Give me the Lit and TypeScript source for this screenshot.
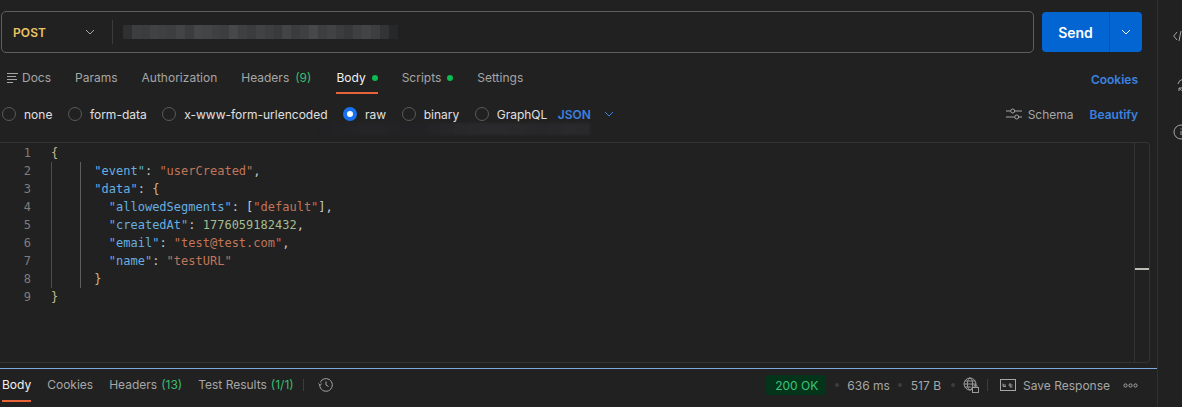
import { LitElement, html, css } from "lit";
import { customElement } from "lit/decorators.js";

const chev = (c: string) => html`<svg width="10" height="6" viewBox="0 0 10 6" fill="none" stroke="${c}" stroke-width="1"><path d="M1 1l4 4 4-4"/></svg>`;

const tones = [46,60,58,64,62,60,66,58,68,66,62,60,70,62,58,64,60,56,66,58,62,70,60,64,58,54,62,66,60,50,38];
const smear = [33,34,35,36,36,35,34,34,36,38,40,41,42,42,41,40,39,40,42,41];

type Tok = [string, string];
const code: { ind: number; toks: Tok[] }[] = [
  { ind: 0, toks: [["b", "{"]] },
  { ind: 6, toks: [["k", '"event"'], ["p", ": "], ["s", '"userCreated"'], ["p", ","]] },
  { ind: 6, toks: [["k", '"data"'], ["p", ": "], ["b", "{"]] },
  { ind: 8, toks: [["k", '"allowedSegments"'], ["p", ": ["], ["s", '"default"'], ["p", "],"]] },
  { ind: 8, toks: [["k", '"createdAt"'], ["p", ": "], ["n", "1776059182432"], ["p", ","]] },
  { ind: 8, toks: [["k", '"email"'], ["p", ": "], ["s", '"test@test.com"'], ["p", ","]] },
  { ind: 8, toks: [["k", '"name"'], ["p", ": "], ["s", '"testURL"']] },
  { ind: 6, toks: [["b", "}"]] },
  { ind: 0, toks: [["b", "}"]] },
];

@customElement("app-root")
export class AppRoot extends LitElement {
  static styles = css`
    :host { display: grid; grid-template-columns: 1157px 25px; width: 1182px; height: 407px; overflow: hidden; background: #212121; color: #a6a6a6; font-family: Inter, "Noto Sans", sans-serif; font-size: 12px; }
    * { box-sizing: border-box; }
    .main { display: flex; flex-direction: column; height: 407px; min-width: 0; }
    .side { border-left: 1px solid #303030; display: flex; flex-direction: column; align-items: flex-start; padding: 31px 0 0 15px; overflow: hidden; }
    .side svg { flex: none; }
    .i2 { margin: 37px 0 0 4px; }
    .i3 { margin-top: 32px; }

    .urlrow { display: flex; gap: 8px; padding: 11px 15px 0 1px; height: 53px; }
    .url { flex: 1; height: 42px; border: 1px solid #5e5e5e; border-radius: 5px; display: flex; align-items: center; }
    .method { width: 111px; height: 24px; display: flex; align-items: center; justify-content: space-between; padding: 0 17px 0 11px; border-right: 1px solid #3c3c3c; color: #ebc465; font-weight: 600; font-size: 12px; letter-spacing: .1px; }
    .blur { display: flex; margin-left: 10px; height: 14px; filter: blur(.6px); }
    .blur i { display: block; width: 8.87px; height: 100%; }
    .send { width: 100px; height: 40px; margin-top: 1px; background: #0265d2; border-radius: 4px; display: flex; color: #fff; font-weight: 600; font-size: 14px; }
    .send-l { width: 68px; display: flex; align-items: center; justify-content: center; border-right: 1px solid #0353ad; }
    .send-r { flex: 1; display: flex; align-items: center; justify-content: center; }

    .tabs { display: flex; align-items: flex-start; height: 40px; padding: 0 19px 0 6px; margin-top: 7px; }
    .tab { height: 34px; display: flex; align-items: center; gap: 6px; margin-right: 24px; border-bottom: 2px solid transparent; padding-top: 3px; }
    .tab.on { color: #f0f0f0; border-bottom-color: #e8633a; }
    .tab.docs { gap: 3px; }
    .tab.hd { margin-right: 25px; }
    .g { color: #3bbd72; }
    .dot { width: 6px; height: 6px; border-radius: 50%; background: #0cbb52; }
    .spring { flex: 1; }
    .link { color: #3b82e0; font-weight: 600; }
    .cookies { padding-top: 12px; }

    .body { display: flex; align-items: center; height: 22px; padding: 0 19px 0 2px; color: #e0e0e0; margin-top: 3px; position: relative; z-index: 1; }
    .opt { display: flex; align-items: center; gap: 8px; margin-right: 15.5px; }
    .radio { width: 14px; height: 14px; border-radius: 50%; border: 1px solid #5a5a5a; flex: none; }
    .radio.on { border: 4px solid #1672ee; background: #fff; }
    .json { margin-left: -5px; display: flex; align-items: center; gap: 13px; }
    .schema { display: flex; align-items: center; gap: 5px; margin-right: 16px; color: #a6a6a6; }

    .smearrow { display: flex; height: 12px; padding-left: 318px; margin-top: -2px; filter: blur(1px); }
    .smearrow i { display: block; width: 13.6px; height: 100%; }

    .ed { height: 221px; margin-top: 7px; margin-right: 7px; border-top: 1px solid #333; border-bottom: 1px solid #333; border-right: 1px solid #333; border-radius: 0 4px 4px 0; display: grid; grid-template-columns: 1fr 14px; background: #212121; position: relative; }
    .lines { padding-top: 1px; font-family: "DejaVu Sans Mono", monospace; font-size: 12px; line-height: 18px; border-right: 1px solid #333; }
    .ln { display: grid; grid-template-columns: 51px 1fr; height: 18px; white-space: pre; }
    .no { color: #7d7d7d; text-align: right; padding-right: 20px; }
    .txt { position: relative; color: #c8c8c8; }
    .guide1, .guide2 { position: absolute; top: 0; bottom: 0; width: 1px; background: #4c4c4c; }
    .guide1 { left: 0; }
    .guide2 { left: 29px; background: #5e5e5e; }
    .k { color: #66aee0; }
    .s { color: #c0765a; }
    .n { color: #a3bd91; }
    .p { color: #c8c8c8; }
    .b { color: #c9b98a; }
    .mini { display: flex; flex-direction: column; padding-top: 125px; }
    .thumb { height: 2px; background: #bdbdb5; }

    .res { margin-top: 5px; border-top: 1px solid #7fa8dc; flex: 1; display: flex; align-items: flex-start; padding: 0 19px 0 2px; }
    .rt { height: 33px; display: flex; align-items: center; gap: 4px; margin-right: 16px; border-bottom: 2px solid transparent; }
    .rt.on { color: #f0f0f0; border-bottom-color: #e8633a; }
    .rt.last { margin-right: 9px; }
    .sep { width: 1px; height: 12px; background: #3d3d3d; }
    .rs { display: flex; align-items: center; height: 32px; }
    .hist { margin-left: 14px; }
    .ok { background: #04351a; color: #3cc47a; padding: 0 8px 0 9px; height: 20px; border-radius: 3px; display: flex; align-items: center; font-size: 12px; }
    .sm { width: 4px; height: 4px; border-radius: 50%; background: #3d3d3d; margin: 0 8.5px; }
    .sm.last { margin: 0 8px 0 10px; }
    .sep2 { margin: 0 12px 0 8px; }
    .save { margin: 0 13px 0 7px; }
  `;

  render() {
    return html`
      <div class="main">
        <div class="urlrow">
          <div class="url">
            <div class="method">POST ${chev("#a6a6a6")}</div>
            <div class="blur">${tones.map((t) => html`<i style="background:rgb(${t},${t + 2},${t + 4})"></i>`)}</div>
          </div>
          <div class="send"><div class="send-l">Send</div><div class="send-r">${chev("#fff")}</div></div>
        </div>
        <div class="tabs">
          <div class="tab docs">
            <svg width="13" height="12" viewBox="0 0 13 12" stroke="#a6a6a6" fill="none"><path d="M1 1.5h11M1 4.5h9M1 7.5h10M1 10.5h6"/></svg>
            Docs
          </div>
          <div class="tab">Params</div>
          <div class="tab">Authorization</div>
          <div class="tab hd">Headers <span class="g">(9)</span></div>
          <div class="tab on">Body <span class="dot"></span></div>
          <div class="tab">Scripts <span class="dot"></span></div>
          <div class="tab">Settings</div>
          <div class="spring"></div>
          <div class="link cookies">Cookies</div>
        </div>
        <div class="body">
          <div class="opt"><span class="radio"></span>none</div>
          <div class="opt"><span class="radio"></span>form-data</div>
          <div class="opt"><span class="radio"></span>x-www-form-urlencoded</div>
          <div class="opt"><span class="radio on"></span>raw</div>
          <div class="opt"><span class="radio"></span>binary</div>
          <div class="opt"><span class="radio"></span>GraphQL</div>
          <div class="link json">JSON ${chev("#3b82e0")}</div>
          <div class="spring"></div>
          <div class="schema">
            <svg width="17" height="12" viewBox="0 0 17 12" fill="none" stroke="#a6a6a6"><path d="M0 3h4.5M9 3h7M0 9h8.5M13 9h3"/><circle cx="6.7" cy="3" r="2"/><circle cx="10.7" cy="9" r="2"/></svg>
            Schema
          </div>
          <div class="link">Beautify</div>
        </div>
        <div class="smearrow">${smear.map((t) => html`<i style="background:rgb(${t},${t},${t + 2})"></i>`)}</div>
        <div class="ed">
          <div class="lines">
            ${code.map(
              (l, i) => html`<div class="ln"><span class="no">${i + 1}</span><span class="txt">${i > 0 && i < 8 ? html`<span class="guide1"></span><span class="guide2"></span>` : ""}${" ".repeat(l.ind)}${l.toks.map(([c, t]) => html`<span class="${c}">${t}</span>`)}</span></div>`
            )}
          </div>
          <div class="mini"><div class="thumb"></div></div>
        </div>
        <div class="res">
          <div class="rt on">Body</div>
          <div class="rt">Cookies</div>
          <div class="rt">Headers <span class="g">(13)</span></div>
          <div class="rt last">Test Results <span class="g">(1/1)</span></div>
          <div class="rs"><span class="sep"></span>
            <svg class="hist" width="16" height="16" viewBox="0 0 16 16" fill="none" stroke="#a6a6a6"><path d="M2.2 5.5A6.3 6.3 0 1 1 1.7 8M.5 6.5l1.6 1.7 1.7-1.6M8 4.5V8l2.5 1.5"/></svg>
          </div>
          <div class="spring"></div>
          <div class="rs">
            <div class="ok">200 OK</div><span class="sm"></span>636 ms<span class="sm"></span>517 B<span class="sm last"></span>
            <svg width="16" height="16" viewBox="0 0 16 16" fill="none" stroke="#a6a6a6" stroke-width=".9"><circle cx="7" cy="7" r="6"/><ellipse cx="7" cy="7" rx="2.6" ry="6"/><path d="M1 7h12M1.8 4h10.4M1.8 10h6"/><rect x="9.5" y="10.5" width="6" height="5" fill="#212121"/><path d="M11 10.5V9.3a1.5 1.5 0 0 1 3 0v1.2"/></svg>
            <span class="sep sep2"></span>
            <svg width="16" height="12" viewBox="0 0 16 12" fill="none" stroke="#a6a6a6"><rect x=".5" y=".5" width="15" height="11"/><path d="M3 6h3M3 4.5v3h3M8.5 6h4M10 4v4h2.5" stroke-width=".9"/></svg>
            <span class="save">Save Response</span>
            <svg width="15" height="5" viewBox="0 0 15 5" fill="none" stroke="#a6a6a6"><circle cx="2.5" cy="2.5" r="1.6"/><circle cx="7.5" cy="2.5" r="1.6"/><circle cx="12.5" cy="2.5" r="1.6"/></svg>
          </div>
        </div>
      </div>
      <div class="side">
        <svg width="12" height="10" viewBox="0 0 12 10" fill="none" stroke="#a6a6a6"><path d="M4 1L.7 5 4 9M8 0L6 10"/></svg>
        <svg class="i2" width="14" height="14" viewBox="0 0 14 14" fill="none" stroke="#a6a6a6"><path d="M1 6a6 6 0 0 1 11-2M13 8a6 6 0 0 1-11 2M12 1v3H9M2 13v-3h3"/></svg>
        <svg class="i3" width="16" height="16" viewBox="0 0 16 16" fill="none" stroke="#a6a6a6"><circle cx="8" cy="8" r="7"/><path d="M8 7v4M8 4.5v1"/></svg>
      </div>
    `;
  }
}
